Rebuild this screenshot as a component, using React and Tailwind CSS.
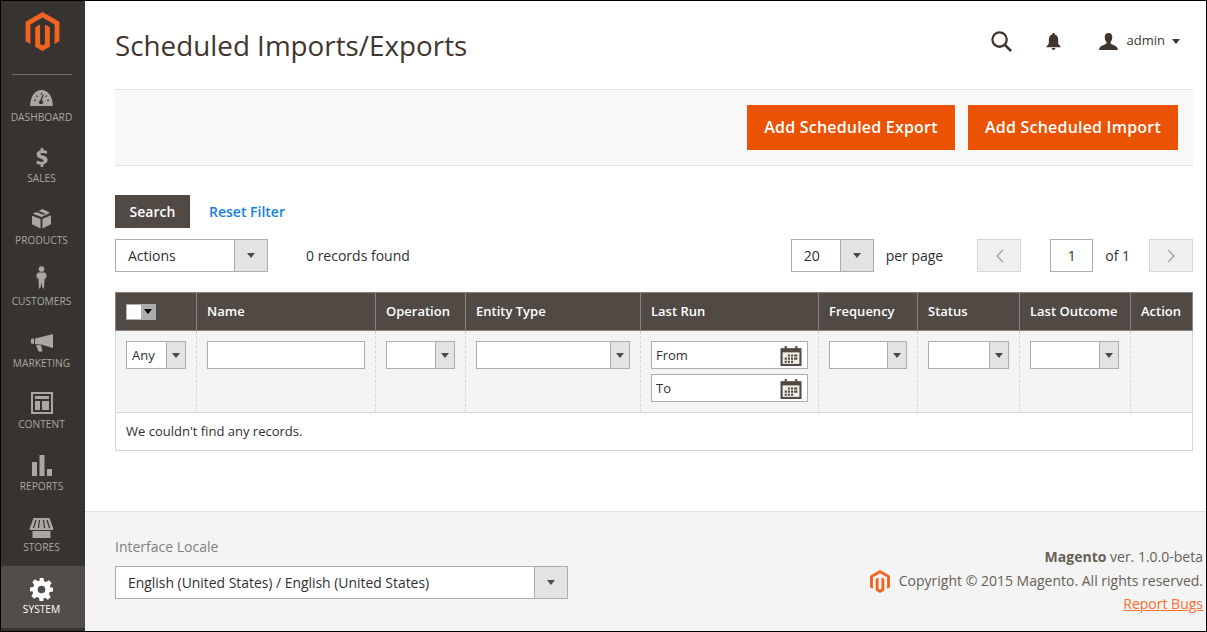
import React from "react";

const LOGO = "M12.5 0 L0 7.2 V21.6 L3.6 23.6 V9.2 L12.5 4.1 L21.4 9.2 V23.6 L25 21.6 V7.2 Z M14.3 23.6 L12.5 24.7 L10.7 23.6 V9.3 L7.1 11.3 V25.7 L12.5 28.8 L17.9 25.7 V11.3 L14.3 9.3 Z";

const Logo = ({ className }) => (
  <svg viewBox="0 0 25 28.8" className={className}><path d={LOGO} fill="#f26322" /></svg>
);

const navIcons = {
  dashboard: (
    <svg viewBox="0 0 24 17" className="w-[23px] h-[16px]">
      <path d="M0 17 C0 7 5 0 12 0 C19 0 24 7 24 17 Z" fill="#aaa6a0" />
      <path d="M13.8 5 L11 12" stroke="#373330" strokeWidth="1.4" />
      <circle cx="11.5" cy="13" r="2.2" fill="#373330" />
      <path d="M4 11h2M6.5 6l1.2 1.2M12 3v2M18 11h2M17.5 6l-1.2 1.2" stroke="#373330" strokeWidth="1.2" />
    </svg>
  ),
  sales: (
    <svg viewBox="0 0 13 21" className="w-[12px] h-[19px]">
      <path d="M5 0h3v2.3c1.7.2 3.2.7 4.3 1.3l-.9 3C10 5.9 8.500 5.400 6.800 5.400c-1.400 0-2 .5-2 1.100 0 .8 1 1.200 3 1.900 3.300 1.100 4.900 2.500 4.900 5 0 2.500-1.700 4.300-4.700 4.800V21H5v-2.600c-1.900-.1-3.700-.7-4.800-1.400l1-3.100c1.300.8 3 1.400 4.800 1.400 1.500 0 2.400-.6 2.400-1.400 0-.9-.9-1.400-2.900-2.100C2.600 11.300.600 10 .600 7.300c0-2.400 1.700-4.300 4.400-4.800Z" fill="#aaa6a0" />
    </svg>
  ),
  products: (
    <svg viewBox="0 0 20 21" className="w-[19px] h-[20px]">
      <path d="M9 10.500 L0 7 V16 L9 20.500 Z" fill="#aaa6a0" />
      <path d="M11 10.500 L20 6.500 V16 L11 20.500 Z" fill="#aaa6a0" />
      <path d="M11 0 L19 4 L10 8.500 L1 5 L4.500 3 L12 6 L14 5 L7 2 Z" fill="#aaa6a0" />
    </svg>
  ),
  customers: (
    <svg viewBox="0 0 12 27" className="w-[11px] h-[23px]">
      <circle cx="6" cy="3.500" r="3.300" fill="#aaa6a0" />
      <path d="M2.500 7.500 H9.500 C11 8 12 9.500 12 11.500 L11 15 L9.500 14.500 L9 27 L7 25 L6 19 L5 25 L3 27 L2.500 14.500 L1 15 L0 11.500 C0 9.500 1 8 2.500 7.500 Z" fill="#aaa6a0" />
    </svg>
  ),
  marketing: (
    <svg viewBox="0 0 22 18" className="w-[22px] h-[18px]">
      <path d="M0 5 L3 4.500 V10 L0 9.500 Z" fill="#aaa6a0" />
      <path d="M4 4.400 L22 0 V14 L11 10.800 V10.800 L4 10 Z" fill="#aaa6a0" />
      <path d="M5 11 L10 11.300 L11.500 17.500 L7.500 17.500 Z" fill="#aaa6a0" />
    </svg>
  ),
  content: (
    <svg viewBox="0 0 22 22" className="w-[22px] h-[22px]">
      <path fillRule="evenodd" d="M0 0H22V22H0Z M2 2V20H20V2Z" fill="#aaa6a0" />
      <path d="M4 4H18V7H4Z M4 9H9V18H4Z M11 9H18V18H11Z" fill="#aaa6a0" />
    </svg>
  ),
  reports: (
    <svg viewBox="0 0 20 21" className="w-[20px] h-[21px]">
      <path d="M0 7H5V21H0Z M7.500 0H12.500V21H7.500Z M15 14H20V21H15Z" fill="#aaa6a0" />
    </svg>
  ),
  stores: (
    <svg viewBox="0 0 24 20" className="w-[25px] h-[20px]">
      <path d="M4 0H20L24 11C24 12 23 12 22 12H2C1 12 0 12 0 11Z" fill="#aaa6a0" />
      <path d="M6.500 2L4 10M10 2L9 10M14 2L15 10M17.500 2L20 10" stroke="#373330" strokeWidth="1.200" />
      <path d="M3 13H21V20H3Z" fill="#aaa6a0" />
    </svg>
  ),
  system: (
    <svg viewBox="0 0 24 24" className="w-[23px] h-[23px]">
      <path fillRule="evenodd" d="M10 0H14L14.700 3.400L16.800 4.300L19.700 2.400L22.600 5.300L20.700 8.200L21.600 10.300L24 10V14L20.600 14.700L19.700 16.800L21.600 19.700L18.700 22.600L15.800 20.700L14 21.500L14 24H10L9.300 20.600L7.200 19.700L4.300 21.600L1.400 18.700L3.300 15.800L2.400 13.700L0 14V10L3.400 9.300L4.300 7.200L2.400 4.300L5.300 1.400L8.200 3.300L10.300 2.400Z M12 8A4 4 0 1 0 12 16A4 4 0 1 0 12 8Z" fill="#ffffff" />
    </svg>
  ),
};

const navItems = [
  ["dashboard", "DASHBOARD", "mt-[3px]"],
  ["sales", "SALES", "mt-[3px]"],
  ["products", "PRODUCTS", "mt-[3px]"],
  ["customers", "CUSTOMERS", "mt-[4px]"],
  ["marketing", "MARKETING", "mt-[3px]"],
  ["content", "CONTENT", "mt-[2px]"],
  ["reports", "REPORTS", "mt-[2px]"],
  ["stores", "STORES", "mt-[1px]"],
  ["system", "SYSTEM", "mt-0"],
];

const Caret = ({ className = "border-t-[#514943]" }) => (
  <span className={`w-0 h-0 border-x-[4px] border-x-transparent border-t-[5px] ${className}`} />
);

const Select = ({ label, className, arrow = "w-[33px]", text = "pl-3 text-[14px]" }) => (
  <div className={`flex items-stretch border border-[#adadad] bg-white ${className}`}>
    <div className={`flex-1 flex items-center text-[#303030] ${text}`}>{label}</div>
    <div className={`flex items-center justify-center bg-[#e3e3e3] border-l border-[#adadad] ${arrow}`}>
      <Caret />
    </div>
  </div>
);

const FilterSelect = ({ label, className }) => (
  <Select label={label} className={`h-[28px] ${className}`} arrow="w-[19px]" text="pl-[5px] pt-px text-[13px]" />
);

const Calendar = () => (
  <svg viewBox="0 0 20 20" className="w-[22px] h-[21px]">
    <path d="M0 3H20V20H0Z" fill="#514943" />
    <path d="M2 7H18V18H2Z" fill="#f0ede6" />
    <path d="M4 1H6V5H4Z M14 1H16V5H14Z" fill="#514943" />
    <path d="M7 9h2v2H7Z M10 9h2v2h-2Z M13 9h3v2h-3Z M4 12h2v2H4Z M7 12h2v2H7Z M10 12h2v2h-2Z M13 12h3v2h-3Z M4 15h2v2H4Z M7 15h2v2H7Z M10 15h2v2h-2Z" fill="#514943" />
  </svg>
);

const DateInput = ({ label }) => (
  <div className="flex items-center justify-between h-[28px] border border-[#adadad] bg-white pl-1 pr-[5px] text-[13px] text-[#303030]">
    <span className="pt-px">{label}</span>
    <Calendar />
  </div>
);

const headers = [
  "",
  "Name",
  "Operation",
  "Entity Type",
  "Last Run",
  "Frequency",
  "Status",
  "Last Outcome",
  "Action",
];

const gridCols = "grid grid-cols-[80px_179px_90px_175px_178px_99px_102px_111px_1fr]";

export default function App() {
  return (
    <div className="w-[1207px] h-[632px] overflow-hidden border border-black bg-white flex font-['Open_Sans',sans-serif] text-[#303030]">
      <aside className="w-[84px] shrink-0 bg-[#373330] flex flex-col">
        <div className="h-[74px] -mb-px ml-[11px] mr-[13px] border-b border-[#736e6a] flex justify-center pt-[11px]">
          <Logo className="w-[35px] h-[39px]" />
        </div>
        {navItems.map(([key, label, gap]) => (
          <div
            key={key}
            className={`h-[61.500px] shrink-0 flex flex-col items-center justify-end pb-[11px] pr-[3px] ${key === "system" ? "bg-[#524d49]" : ""}`}
          >
            <div className="flex items-end justify-center">{navIcons[key]}</div>
            <div className={`${gap} text-[10.200px] leading-[16px] ${key === "system" ? "text-white" : "text-[#aaa6a0]"}`}>{label}</div>
          </div>
        ))}
      </aside>

      <main className="flex-1 flex flex-col min-w-0">
        <header className="h-[88px] shrink-0 flex items-center pl-[30px] pr-[26px]">
          <h1 className="text-[27.800px] leading-[36px] text-[#41362f]">Scheduled Imports/Exports</h1>
          <div className="ml-auto mb-[8px] flex items-center">
            <svg viewBox="0 0 22 22" className="w-[21px] h-[21px]">
              <circle cx="9" cy="9" r="7.500" fill="none" stroke="#41362f" strokeWidth="2.400" />
              <path d="M14.500 14.500L21 21" stroke="#41362f" strokeWidth="2.800" />
            </svg>
            <svg viewBox="0 0 16 18" className="ml-[34px] w-[15px] h-[17px]">
              <path d="M8 0C9 0 9.500 .6 9.500 1.500C12 2.300 13 4.500 13 7V11L16 15H0L3 11V7C3 4.500 4 2.300 6.500 1.500C6.500 .6 7 0 8 0Z" fill="#41362f" />
              <path d="M6 16H10C10 17.200 9 18 8 18C7 18 6 17.200 6 16Z" fill="#41362f" />
            </svg>
            <svg viewBox="0 0 20 18" className="ml-[38px] w-[19px] h-[17px]">
              <path d="M10 0C12.800 0 14 2 14 4.500C14 6.500 13.200 8.300 12.200 9.500V11C13.500 12.500 20 13 20 18H0C0 13 6.500 12.500 7.800 11V9.500C6.800 8.300 6 6.500 6 4.500C6 2 7.200 0 10 0Z" fill="#41362f" />
            </svg>
            <span className="ml-[9px] text-[13px] text-[#41362f]">admin</span>
            <Caret className="ml-[7px] border-t-[#41362f]" />
          </div>
        </header>

        <div className="ml-[30px] mr-[13px]">
          <div className="h-[77px] bg-[#f8f8f8] border-y border-[#e3e3e3] flex items-center justify-end gap-[13px] pr-[15px]">
            <button className="w-[208px] h-[45px] pb-[2px] bg-[#eb5202] text-white text-[16px] font-semibold tracking-[0.2px]">Add Scheduled Export</button>
            <button className="w-[210px] h-[45px] pb-[2px] bg-[#eb5202] text-white text-[16px] font-semibold tracking-[0.2px]">Add Scheduled Import</button>
          </div>

          <div className="mt-[29px] flex items-center">
            <button className="w-[75px] h-[33px] bg-[#514943] text-white text-[14px] font-semibold">Search</button>
            <a className="ml-[19px] text-[14px] font-semibold text-[#1a7fd8]">Reset Filter</a>
          </div>

          <div className="mt-[11px] flex items-center h-[33px] text-[14px]">
            <Select label="Actions" className="w-[153px] h-[33px]" />
            <span className="ml-[38px]">0 records found</span>
            <Select label="20" className="ml-auto w-[83px] h-[33px]" arrow="w-[33px]" text="pl-3 text-[14px]" />
            <span className="ml-[12px]">per page</span>
            <div className="ml-[34px] w-[44px] h-[33px] bg-[#f0f0f0] border border-[#d6d6d6] flex items-center justify-center">
              <svg viewBox="0 0 9 14" className="w-[9px] h-[14px]"><path d="M8 1L2 7L8 13" fill="none" stroke="#a8a8a8" strokeWidth="1.500" /></svg>
            </div>
            <div className="ml-[29px] w-[43px] h-[33px] border border-[#adadad] flex items-center justify-center">1</div>
            <span className="ml-[12px]">of 1</span>
            <div className="ml-[19px] w-[44px] h-[33px] bg-[#f0f0f0] border border-[#d6d6d6] flex items-center justify-center">
              <svg viewBox="0 0 9 14" className="w-[9px] h-[14px]"><path d="M1 1L7 7L1 13" fill="none" stroke="#a8a8a8" strokeWidth="1.500" /></svg>
            </div>
          </div>

          <div className="mt-[20px]">
            <div className={`${gridCols} h-[39px] bg-[#514943] border border-[#8a837f] text-white text-[13px] font-semibold`}>
              {headers.map((h, i) => (
                <div key={i} className={`flex items-center pl-[10px] ${i > 0 ? "border-l border-[#8a837f]" : ""}`}>
                  {i === 0 ? (
                    <div className="flex w-[30px] h-[16px] border border-[#adadad] bg-white">
                      <div className="flex-1" />
                      <div className="w-[14px] bg-[#adadad] flex items-center justify-center">
                        <Caret className="border-t-black" />
                      </div>
                    </div>
                  ) : h}
                </div>
              ))}
            </div>
            <div className={`${gridCols} h-[82px] bg-[#f4f4f4] border-x border-b border-x-[#d6d6d6] border-b-[#d6d6d6]`}>
              <div className="pl-[10px] pt-[10px]"><FilterSelect label="Any" className="w-[60px]" /></div>
              <div className="border-l border-dashed border-[#d6d6d6] pl-[10px] pt-[10px]">
                <div className="w-[158px] h-[28px] border border-[#adadad] bg-white" />
              </div>
              <div className="border-l border-dashed border-[#d6d6d6] pl-[10px] pt-[10px]"><FilterSelect className="w-[69px]" /></div>
              <div className="border-l border-dashed border-[#d6d6d6] pl-[10px] pt-[10px]"><FilterSelect className="w-[154px]" /></div>
              <div className="border-l border-dashed border-[#d6d6d6] pl-[10px] pt-[10px] pr-[10px] flex flex-col gap-[5px]">
                <DateInput label="From" />
                <DateInput label="To" />
              </div>
              <div className="border-l border-dashed border-[#d6d6d6] pl-[10px] pt-[10px]"><FilterSelect className="w-[78px]" /></div>
              <div className="border-l border-dashed border-[#d6d6d6] pl-[10px] pt-[10px]"><FilterSelect className="w-[81px]" /></div>
              <div className="border-l border-dashed border-[#d6d6d6] pl-[10px] pt-[10px]"><FilterSelect className="w-[89px]" /></div>
              <div className="border-l border-dashed border-[#d6d6d6]" />
            </div>
            <div className="h-[38px] border-x border-b border-[#d6d6d6] flex items-center pl-[10px] text-[13px]">We couldn't find any records.</div>
          </div>
        </div>

        <footer className="mt-auto h-[120px] bg-[#f4f4f4] border-t border-[#e3e3e3] flex justify-between pl-[30px] pr-[3px]">
          <div className="pt-[25px]">
            <div className="text-[14px] leading-[20px] text-[#808080]">Interface Locale</div>
            <Select label="English (United States) / English (United States)" className="mt-[9px] w-[453px] h-[33px]" text="pl-3 pt-px text-[13.900px]" />
          </div>
          <div className="pt-[33px] text-[14px] leading-[24px] text-right text-[#676056]">
            <div><span className="font-bold">Magento</span> ver. 1.0.0-beta</div>
            <div className="flex items-center justify-end">
              <Logo className="w-[20px] h-[23px] mr-[9px]" />
              <span>Copyright © 2015 Magento. All rights reserved.</span>
            </div>
            <a className="block leading-[22px] underline text-[#fb6c30]">Report Bugs</a>
          </div>
        </footer>
      </main>
    </div>
  );
}
